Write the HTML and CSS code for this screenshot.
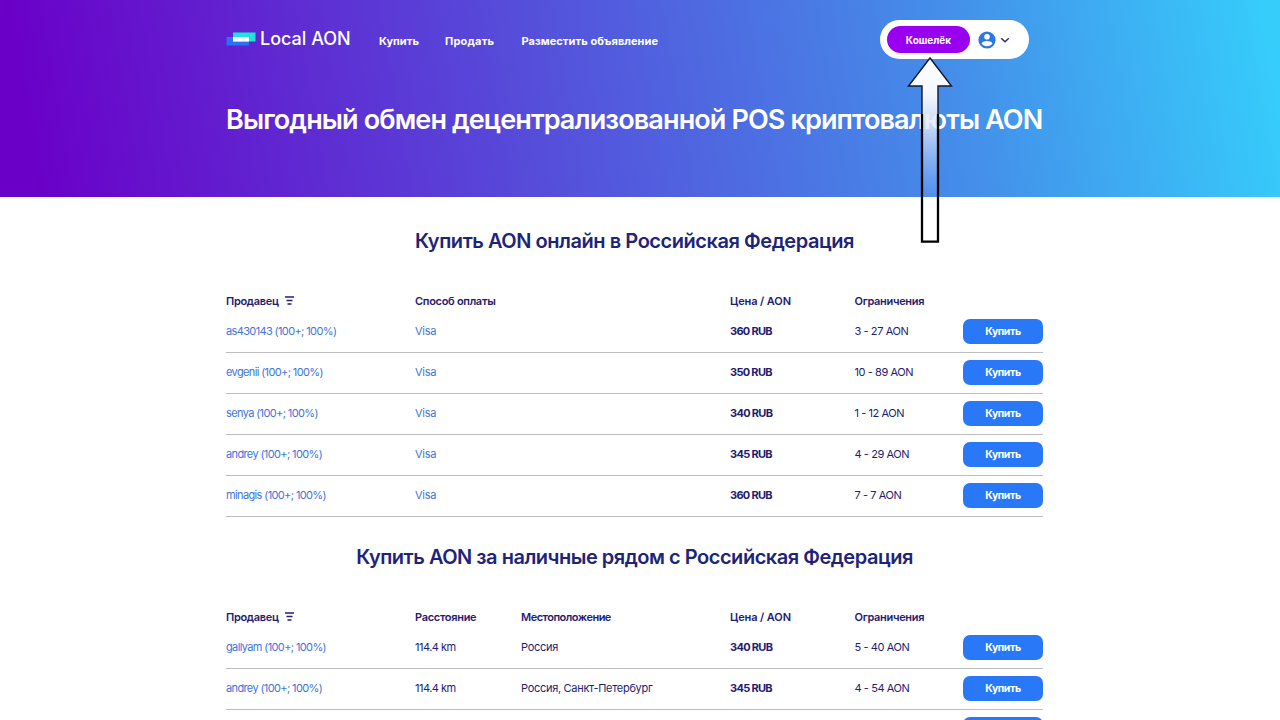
FILE: index.html
```html
<!DOCTYPE html>
<html lang="ru">
<head>
    <meta charset="UTF-8">
    <title>Local AON</title>
    <link rel="stylesheet" href="styles.css">
</head>
<body>
    <header class="hero">
        <div class="container">
            <div class="topbar">
                <a class="logo" href="#">
                    <svg width="30" height="14" viewBox="0 0 30 14">
                        <rect x="0.5" y="5" width="22.5" height="8.5" fill="#2a72f2"/>
                        <rect x="7" y="0.5" width="22.5" height="9" fill="#1de5dc"/>
                        <rect x="7" y="5" width="16" height="4.5" fill="#fff"/>
                    </svg>
                    <span>Local AON</span>
                </a>
                <nav class="nav">
                    <a class="nav-buy" href="#">Купить</a>
                    <a class="nav-sell" href="#">Продать</a>
                    <a class="nav-post" href="#">Разместить объявление</a>
                </nav>
                <div class="account">
                    <button class="wallet-btn">Кошелёк</button>
                    <svg class="user-icon" width="18" height="18" viewBox="0 0 18 18">
                        <circle cx="9" cy="9" r="8.6" fill="#2b78e4"/>
                        <circle cx="9" cy="5.8" r="2.8" fill="#fff"/>
                        <path d="M3.6 12.6C4.4 10.8 6.7 10.1 9 10.1s4.6.7 5.4 2.5C13.2 14.3 11.3 15.3 9 15.3s-4.2-1-5.4-2.7z" fill="#fff"/>
                    </svg>
                    <svg width="10" height="6" viewBox="0 0 10 6">
                        <path d="M1.2 1.2L5 4.8L8.8 1.2" fill="none" stroke="#2a2a72" stroke-width="1.4"/>
                    </svg>
                </div>
            </div>
            <h1>Выгодный обмен децентрализованной POS криптовалюты AON</h1>
        </div>
    </header>

    <main class="container">
        <section>
            <h2 class="title-online">Купить AON онлайн в Российская Федерация</h2>
            <div class="row head">
                <span class="seller">Продавец
                    <svg width="9" height="9" viewBox="0 0 9 9"><path d="M0 1h9M1.5 4.5h6M2.5 8h4" stroke="#241c70" stroke-width="1.4"/></svg>
                </span>
                <span class="wide">Способ оплаты</span>
                <span class="price">Цена / AON</span>
                <span>Ограничения</span>
            </div>
            <div class="row">
                <a href="#">as430143 (100+; 100%)</a><a class="wide" href="#">Visa</a>
                <b>360 RUB</b><span class="limits">3 - 27 AON</span><button class="buy-btn">Купить</button>
            </div>
            <div class="row">
                <a href="#">evgenii (100+; 100%)</a><a class="wide" href="#">Visa</a>
                <b>350 RUB</b><span class="limits">10 - 89 AON</span><button class="buy-btn">Купить</button>
            </div>
            <div class="row">
                <a href="#">senya (100+; 100%)</a><a class="wide" href="#">Visa</a>
                <b>340 RUB</b><span class="limits">1 - 12 AON</span><button class="buy-btn">Купить</button>
            </div>
            <div class="row">
                <a href="#">andrey (100+; 100%)</a><a class="wide" href="#">Visa</a>
                <b>345 RUB</b><span class="limits">4 - 29 AON</span><button class="buy-btn">Купить</button>
            </div>
            <div class="row">
                <a href="#">minagis (100+; 100%)</a><a class="wide" href="#">Visa</a>
                <b>360 RUB</b><span class="limits">7 - 7 AON</span><button class="buy-btn">Купить</button>
            </div>
        </section>

        <section>
            <h2 class="title-cash">Купить AON за наличные рядом с Российская Федерация</h2>
            <div class="row head">
                <span class="seller">Продавец
                    <svg width="9" height="9" viewBox="0 0 9 9"><path d="M0 1h9M1.5 4.5h6M2.5 8h4" stroke="#241c70" stroke-width="1.4"/></svg>
                </span>
                <span>Расстояние</span>
                <span class="place">Местоположение</span>
                <span class="price">Цена / AON</span>
                <span>Ограничения</span>
            </div>
            <div class="row">
                <a href="#">gallyam (100+; 100%)</a><span class="distance">114.4 km</span><span>Россия</span>
                <b>340 RUB</b><span class="limits">5 - 40 AON</span><button class="buy-btn">Купить</button>
            </div>
            <div class="row">
                <a href="#">andrey (100+; 100%)</a><span class="distance">114.4 km</span><span>Россия, Санкт-Петербург</span>
                <b>345 RUB</b><span class="limits">4 - 54 AON</span><button class="buy-btn">Купить</button>
            </div>
            <div class="row">
                <button class="buy-btn" aria-label="Купить"></button>
            </div>
        </section>
    </main>

    <!-- Arrow pointing at the wallet button -->
    <svg class="pointer" width="46" height="188" viewBox="0 0 46 188">
        <defs>
            <linearGradient id="fade" x1="0" y1="0" x2="0" y2="1">
                <stop offset="0" stop-color="#fff"/>
                <stop offset=".2" stop-color="#f4f7ff"/>
                <stop offset=".36" stop-color="#dfe8fb" stop-opacity=".85"/>
                <stop offset=".74" stop-color="#b4ccff" stop-opacity=".12"/>
                <stop offset=".78" stop-color="#fff" stop-opacity="0"/>
            </linearGradient>
        </defs>
        <path d="M23 2L44.5 30H31V186H15V30H1.5z" fill="url(#fade)"/>
        <path d="M15 60V30H1.5L23 2L44.5 30H31V60" fill="none" stroke="#10182c" stroke-width="1.4"/>
        <path d="M15 58V185.7H31V58" fill="none" stroke="#000" stroke-width="2.3"/>
    </svg>
</body>
</html>
```

FILE: styles.css
```css
:root {
    --blue: #2878f8;
    --link-color: #3f74dc;
    --text-color: #241c70;
}

* {
    margin: 0;
    padding: 0;
    box-sizing: border-box;
}

body {
    font-family: 'Inter', 'Liberation Sans', sans-serif;
    font-size: 11px;
    color: var(--text-color);
    background-color: #fff;
    height: 720px;
    overflow: hidden;
    position: relative;
}

a {
    color: inherit;
    text-decoration: none;
}

.container {
    width: 817px;
    margin-left: 226px;
}

.hero {
    height: 197px;
    padding-top: 20px;
    color: #fff;
    background: linear-gradient(80deg, #6a00c8 3%, #4490ea 75%, #36cdfb 99%);
}

.topbar {
    display: flex;
    height: 40px;
    align-items: center;
}

.logo {
    display: flex;
    align-items: center;
    width: 153px;
    gap: 4px;
    font-size: 18px;
    font-weight: 500;
    white-space: nowrap;
    padding-bottom: 3px;
}

.nav {
    display: flex;
    font-weight: 700;
    padding-top: 2px;
    white-space: nowrap;
}

.nav-buy {
    width: 66px;
}

.nav-sell {
    width: 76.5px;
    letter-spacing: 0.2px;
}

.nav-post {
    letter-spacing: 0.05px;
}

.account {
    display: flex;
    align-items: center;
    align-self: flex-start;
    width: 149px;
    height: 39px;
    margin-left: auto;
    margin-right: 14px;
    padding-left: 7px;
    border-radius: 20px;
    background-color: #fff;
}

.wallet-btn {
    width: 83px;
    height: 27px;
    border: none;
    border-radius: 14px;
    background-color: #9a00f0;
    color: #fff;
    font: 700 10px 'Inter', sans-serif;
}

.user-icon {
    margin: 0 4px 0 8px;
}

h1 {
    margin-top: 43px;
    font-size: 27px;
    line-height: 34px;
    font-weight: 600;
    letter-spacing: -0.88px;
    white-space: nowrap;
}

h2 {
    height: 29px;
    font-size: 20px;
    line-height: 29px;
    font-weight: 600;
    letter-spacing: -0.45px;
    color: #1e2478;
    text-align: center;
    white-space: nowrap;
}

.title-online {
    margin-top: 30px;
    margin-bottom: 34px;
}

.title-cash {
    margin-top: 26px;
    margin-bottom: 34px;
    letter-spacing: -0.48px;
}

.row {
    display: grid;
    grid-template-columns: 189px 106px 209px 124.5px 108.5px 80px;
    align-items: center;
    height: 41px;
    padding-bottom: 2px;
    border-bottom: 1px solid #bdbdc2;
    letter-spacing: -0.3px;
    white-space: nowrap;
}

.row.head {
    height: 22px;
    padding-bottom: 1px;
    border: none;
    font-weight: 600;
}

.row a {
    color: var(--link-color);
    letter-spacing: -0.63px;
}

.row a.wide {
    letter-spacing: -0.3px;
}

.row b {
    letter-spacing: -0.7px;
    font-weight: 700;
}

.row .wide {
    grid-column: span 2;
}

.row .price {
    letter-spacing: -0.1px;
}

.row .place {
    letter-spacing: -0.5px;
}

.row .limits {
    letter-spacing: -0.42px;
}

.row .distance {
    letter-spacing: -0.5px;
}

.seller {
    display: flex;
    align-items: center;
    gap: 6px;
}

.buy-btn {
    grid-column: 6;
    width: 80px;
    height: 25px;
    border: none;
    border-radius: 7px;
    background-color: var(--blue);
    color: #fff;
    font: 700 10.5px 'Inter', sans-serif;
    letter-spacing: -0.45px;
}

.pointer {
    position: absolute;
    left: 907px;
    top: 56px;
}
```
